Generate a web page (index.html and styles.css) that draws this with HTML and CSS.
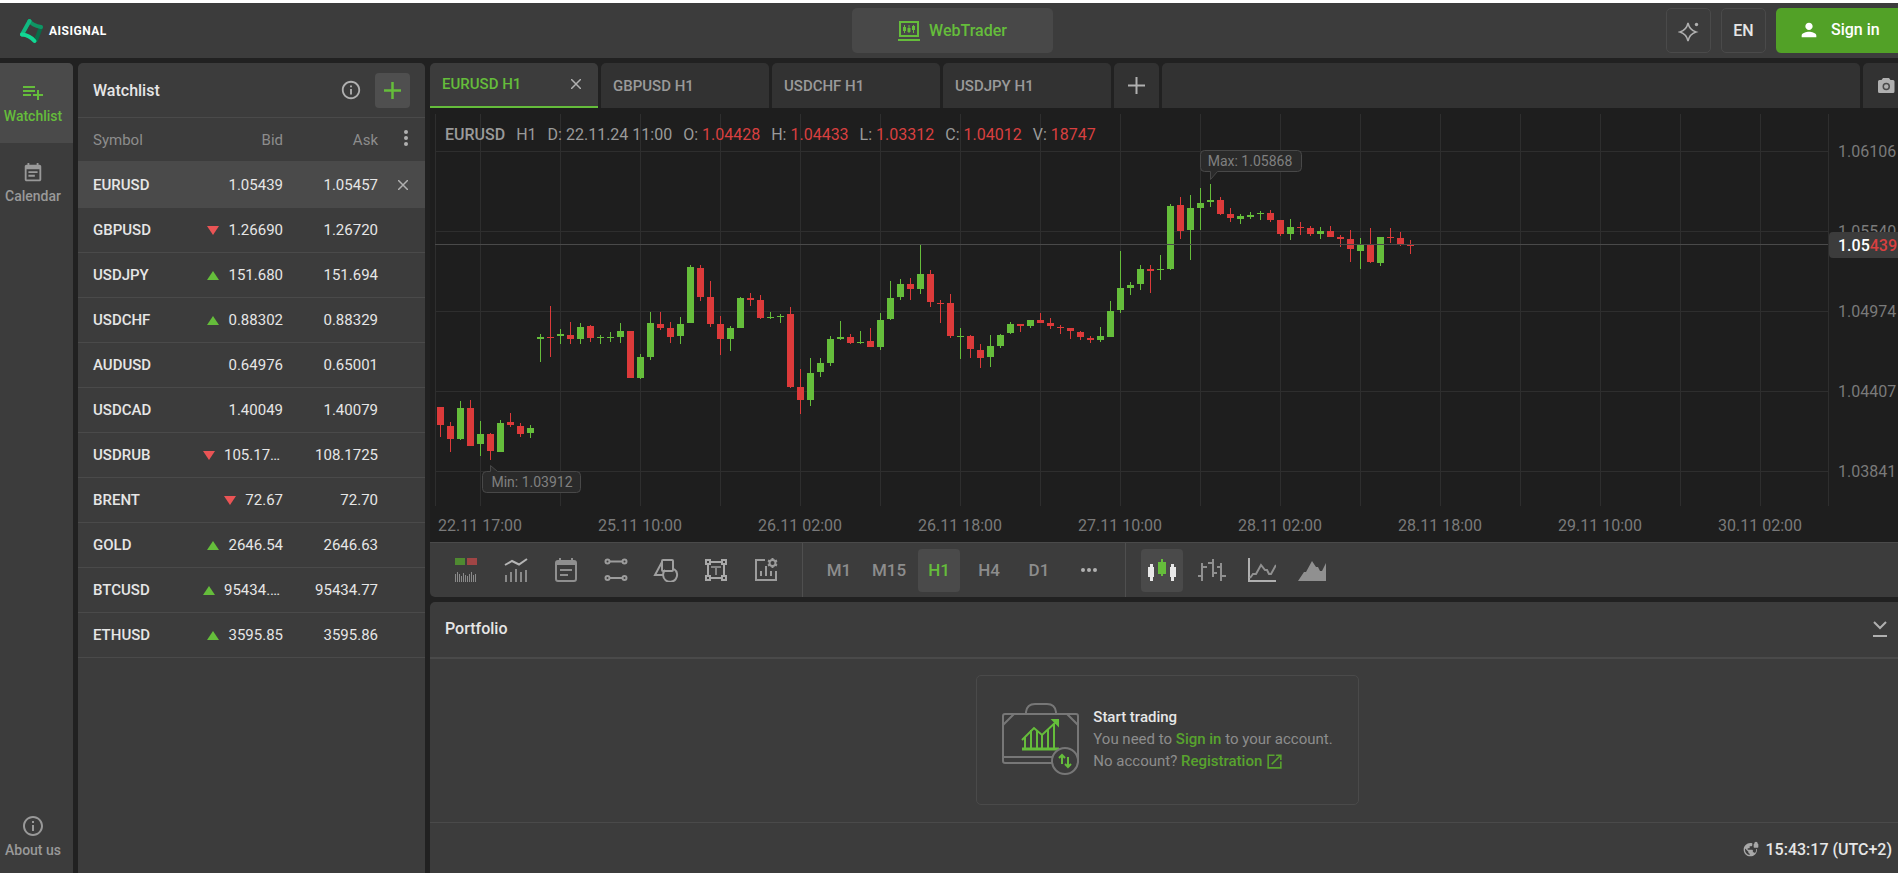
FILE: index.html
```html
<!DOCTYPE html>
<html lang="en">
<head>
<meta charset="utf-8">
<title>AISIGNAL WebTrader</title>
<link rel="stylesheet" href="styles.css">
</head>
<body>
<div class="app">
  <header class="topbar">
    <a class="brand" href="#">
      <svg width="26" height="26" viewBox="0 0 26 26" fill="none" stroke-linecap="round" stroke-linejoin="round" stroke-width="4">
        <path d="M23 9 L18 22" stroke="#0a6b48"/>
        <path d="M11.500 3 C14 7 18 8 23 9" stroke="#0f9564"/>
        <path d="M4 16.500 L11.500 3" stroke="#10b981"/>
        <path d="M4 16.500 C9 17 13 19 16.500 23" stroke="#12d894"/>
      </svg>
      <span>AISIGNAL</span>
    </a>
    <button class="mode" type="button">
      <svg width="22" height="22" viewBox="0 0 22 22" fill="none" stroke="currentColor" stroke-width="2">
        <path d="M2 2h18v14H2zM0 20h22"/><path stroke-width="1" d="M6.500 5v8M11 5v8M15.500 5v8"/><path stroke-width="3" d="M6.500 7v4M11 8v4M15.500 6v4"/>
      </svg>
      WebTrader
    </button>
    <div class="actions">
      <button class="square" type="button" aria-label="Assistant">
        <svg width="22" height="22" viewBox="0 0 22 22"><path d="M10 3 Q11.500 10 18 12 Q11.500 14 10 21 Q8.500 14 2 12 Q8.500 10 10 3z" fill="none" stroke="#b0b0b0" stroke-width="1.500"/><circle cx="18.500" cy="4.500" r="1.700" fill="#b0b0b0"/></svg>
      </button>
      <button class="square" type="button">EN</button>
      <button class="signin" type="button">
        <svg width="22" height="22" viewBox="0 0 24 24" fill="currentColor"><path d="M12 12c2.210 0 4-1.790 4-4s-1.790-4-4-4-4 1.790-4 4 1.790 4 4 4zm0 2c-2.670 0-8 1.340-8 4v2h16v-2c0-2.660-5.330-4-8-4z"/></svg>
        Sign in
      </button>
    </div>
  </header>

  <div class="body">
    <nav class="rail">
      <a class="rail-item active" href="#">
        <svg width="24" height="24" viewBox="0 0 24 24" fill="currentColor"><path d="M14 10H2v2h12v-2zm0-4H2v2h12V6zm4 8v-4h-2v4h-4v2h4v4h2v-4h4v-2h-4zM2 16h8v-2H2v2z"/></svg>
        Watchlist
      </a>
      <a class="rail-item" href="#">
        <svg width="22" height="22" viewBox="0 0 24 24" fill="currentColor"><path d="M19 3h-1V1h-2v2H8V1H6v2H5c-1.110 0-2 .9-2 2v14c0 1.100.89 2 2 2h14c1.100 0 2-.9 2-2V5c0-1.100-.9-2-2-2zm0 16H5V8h14v11z"/><path d="M7 10h10v2H7zM7 14h7v2H7z"/></svg>
        Calendar
      </a>
      <a class="rail-item last" href="#">
        <svg width="24" height="24" viewBox="0 0 24 24" fill="currentColor"><path d="M11 7h2v2h-2zm0 4h2v6h-2zm1-9C6.480 2 2 6.480 2 12s4.480 10 10 10 10-4.480 10-10S17.520 2 12 2zm0 18c-4.410 0-8-3.590-8-8s3.590-8 8-8 8 3.590 8 8-3.590 8-8 8z"/></svg>
        About us
      </a>
    </nav>

    <section class="watchlist">
      <div class="watch-head">
        <h2>Watchlist</h2>
        <button class="icon-btn" type="button" aria-label="Info"><svg width="22" height="22" viewBox="0 0 24 24" fill="currentColor"><path d="M11 7h2v2h-2zm0 4h2v6h-2zm1-9C6.480 2 2 6.480 2 12s4.480 10 10 10 10-4.480 10-10S17.520 2 12 2zm0 18c-4.410 0-8-3.590-8-8s3.590-8 8-8 8 3.590 8 8-3.590 8-8 8z"/></svg></button>
        <button class="add" type="button" aria-label="Add symbol"><svg width="17" height="17" viewBox="0 0 17 17" stroke="currentColor" stroke-width="2.500"><path d="M8.500 0v17M0 8.500h17"/></svg></button>
      </div>
      <table class="quotes">
        <thead>
          <tr><th class="sym">Symbol</th><th>Bid</th><th>Ask</th><th class="act"><button class="icon-btn" type="button" aria-label="Columns"><svg width="4" height="16" viewBox="0 0 4 16" fill="currentColor"><circle cx="2" cy="2" r="2"/><circle cx="2" cy="8" r="2"/><circle cx="2" cy="14" r="2"/></svg></button></th></tr>
        </thead>
        <tbody>
          <tr class="selected"><td class="sym">EURUSD</td><td>1.05439</td><td>1.05457</td><td class="act"><button class="icon-btn" type="button" aria-label="Remove"><svg width="10" height="10" viewBox="0 0 10 10" stroke="currentColor" stroke-width="1.500"><path d="M0 0l10 10M10 0L0 10"/></svg></button></td></tr>
          <tr><td class="sym">GBPUSD</td><td><i class="down"></i>1.26690</td><td>1.26720</td><td></td></tr>
          <tr><td class="sym">USDJPY</td><td><i class="up"></i>151.680</td><td>151.694</td><td></td></tr>
          <tr><td class="sym">USDCHF</td><td><i class="up"></i>0.88302</td><td>0.88329</td><td></td></tr>
          <tr><td class="sym">AUDUSD</td><td>0.64976</td><td>0.65001</td><td></td></tr>
          <tr><td class="sym">USDCAD</td><td>1.40049</td><td>1.40079</td><td></td></tr>
          <tr><td class="sym">USDRUB</td><td><i class="down"></i><span class="clipped">105.17…</span></td><td>108.1725</td><td></td></tr>
          <tr><td class="sym">BRENT</td><td><i class="down"></i>72.67</td><td>72.70</td><td></td></tr>
          <tr><td class="sym">GOLD</td><td><i class="up"></i>2646.54</td><td>2646.63</td><td></td></tr>
          <tr><td class="sym">BTCUSD</td><td><i class="up"></i><span class="clipped">95434.…</span></td><td>95434.77</td><td></td></tr>
          <tr><td class="sym">ETHUSD</td><td><i class="up"></i>3595.85</td><td>3595.86</td><td></td></tr>
        </tbody>
      </table>
    </section>

    <main class="main">
      <div class="tabs">
        <div class="tab current"><a href="#">EURUSD H1</a><button class="icon-btn" type="button" aria-label="Close tab"><svg width="10" height="10" viewBox="0 0 10 10" stroke="currentColor" stroke-width="1.500"><path d="M0 0l10 10M10 0L0 10"/></svg></button></div>
        <div class="tab"><a href="#">GBPUSD H1</a></div>
        <div class="tab"><a href="#">USDCHF H1</a></div>
        <div class="tab"><a href="#">USDJPY H1</a></div>
        <button class="tab-add" type="button" aria-label="New tab"><svg width="17" height="17" viewBox="0 0 17 17" stroke="currentColor" stroke-width="2"><path d="M8.500 0v17M0 8.500h17"/></svg></button>
        <div class="tab-fill"></div>
        <button class="camera" type="button" aria-label="Screenshot"><svg width="17" height="15" viewBox="0 0 17 15"><path d="M5 0h6l1.500 2H15a1.500 1.500 0 0 1 1.500 1.500v10A1.500 1.500 0 0 1 15 15H1.500A1.500 1.500 0 0 1 0 13.500v-10A1.500 1.500 0 0 1 1.500 2h2z" fill="#b0b0b0"/><circle cx="8.250" cy="8.500" r="3" fill="none" stroke="#4a4a4a" stroke-width="1.500"/></svg></button>
      </div>

      <div class="chart">
        <svg class="plot" id="plot"></svg>
        <div class="legend">
          <b>EURUSD</b><span>H1</span><span>D: 22.11.24 11:00</span><span>O: <em>1.04428</em></span><span>H: <em>1.04433</em></span><span>L: <em>1.03312</em></span><span>C: <em>1.04012</em></span><span>V: <em>18747</em></span>
        </div>
        <div class="price-tag">1.05<em>439</em></div>
      </div>

      <div class="toolbar">
        <div class="tool-group">
          <button type="button" aria-label="One-click trading"><svg width="24" height="24" viewBox="0 0 24 24"><path fill="#4f8a31" d="M1 0h10v7H1z"/><path fill="#a04545" d="M13 0h10v7H13z"/><path stroke="#8a8a8a" stroke-width="1" d="M1.500 16v8M3.500 14v10M5.500 16v8M7.500 18v6M9.500 15v9M11.500 17v7M13.500 18v6M15.500 16v8M17.500 14v10M19.500 17v7M21.500 16v8"/></svg></button>
          <button type="button" aria-label="Indicators"><svg width="24" height="24" viewBox="0 0 24 24" fill="none" stroke="currentColor" stroke-width="2"><path d="M1 7l7-4 7 3.500 8-5.500"/><path stroke="#8a8a8a" d="M2 17v7M7 14v10M12 11v13M17 14v10M22 12v12"/></svg></button>
          <button type="button" aria-label="Calendar"><svg width="24" height="25" viewBox="0 0 24 25" fill="none" stroke="#8f8f8f" stroke-width="2"><rect x="2" y="3" width="20" height="20" rx="2"/><path stroke-width="4" d="M2 5h20"/><path d="M6 0v3M18 0v3M6 12h12M6 17h8"/></svg></button>
          <button type="button" aria-label="Lines"><svg width="24" height="24" viewBox="0 0 24 24" fill="none" stroke="#9c9c9c" stroke-width="2"><circle cx="3.500" cy="3.500" r="2"/><circle cx="20.500" cy="3.500" r="2"/><circle cx="3.500" cy="20" r="2"/><circle cx="20.500" cy="20" r="2"/><path d="M5.500 3.500h13M5.500 20h13"/></svg></button>
          <button type="button" aria-label="Shapes"><svg width="26" height="24" viewBox="0 0 26 24" fill="none" stroke="#a0a0a0" stroke-width="2"><path d="M9 4L2 17h8"/><path d="M12 12a7 7 0 1 0 9-1"/><rect x="9" y="2" width="11" height="11" rx="1"/></svg></button>
          <button type="button" aria-label="Text"><svg width="24" height="24" viewBox="0 0 24 24" fill="none" stroke="#a8a8a8" stroke-width="2"><path d="M2 2h4v4H2zM18 2h4v4h-4zM2 18h4v4H2zM18 18h4v4h-4zM6 4h12M6 20h12M4 6v12M20 6v12"/><path stroke="#858585" d="M7 9h10M12 9v8"/></svg></button>
          <button type="button" aria-label="Chart settings"><svg width="24" height="24" viewBox="0 0 24 24" fill="none" stroke="#9c9c9c" stroke-width="2"><path d="M11 2H2v20h20v-9M7 13v5M12 8v10M17 13v5"/><circle cx="18.500" cy="5" r="3"/><path d="M18.500 0v2M18.500 8v2M14 2.500l2 1M21 6.500l2 1M14 7.500l2-1M21 3.500l2-1"/></svg></button>
        </div>
        <div class="tool-group frames">
          <button type="button">M1</button><button type="button">M15</button><button class="on" type="button">H1</button><button type="button">H4</button><button type="button">D1</button>
          <button type="button" aria-label="More"><svg width="16" height="4" viewBox="0 0 16 4" fill="#b0b0b0"><circle cx="2" cy="2" r="2"/><circle cx="8" cy="2" r="2"/><circle cx="14" cy="2" r="2"/></svg></button>
        </div>
        <div class="tool-group">
          <button class="on" type="button" aria-label="Candles"><svg width="28" height="24" viewBox="0 0 28 24"><path fill="#e8e8e8" d="M0 9h2V6h3v3h1v10H5v4H2v-4H0zM22 9h1V6h3v3h2v10h-2v4h-3v-4h-1z"/><path fill="#65bd3b" d="M10 4h3V1h2v3h3v12h-3v2h-2v-2h-3z"/></svg></button>
          <button type="button" aria-label="Bars"><svg width="28" height="24" viewBox="0 0 28 24" fill="none" stroke="#909090" stroke-width="2"><path d="M4 5v18M0 18h4M4 9h5M15 1v18M10 5h5M15 15h4M23 5v18M19 9h4M23 18h5"/></svg></button>
          <button type="button" aria-label="Line"><svg width="28" height="24" viewBox="0 0 28 24" fill="none" stroke="#909090" stroke-width="2"><path stroke="#b0b0b0" d="M1 0v23h27"/><path d="M2 20l3-4 3 0 5-9 4 5h2l2 4h2l5-9"/></svg></button>
          <button type="button" aria-label="Area"><svg width="28" height="24" viewBox="0 0 28 24" fill="#909090"><path d="M0 23l6-9h2l6-11 4 6h2l2 4h2l4-8v18z"/></svg></button>
        </div>
      </div>

      <section class="portfolio">
        <div class="port-head">
          <h2>Portfolio</h2>
          <button class="icon-btn" type="button" aria-label="Collapse"><svg width="16" height="16" viewBox="0 0 16 16" fill="none" stroke="currentColor" stroke-width="2"><path d="M2 1l6 6 6-6M1 15h14"/></svg></button>
        </div>
        <div class="port-body">
          <div class="card">
            <svg width="78" height="74" viewBox="0 0 78 74" fill="none" stroke="#777" stroke-width="2">
              <path d="M24 11V9q1-8 9-8h12q8 0 9 8v2"/>
              <rect x="1" y="11" width="75" height="49" rx="2"/>
              <path d="M1 22l11-11M76 22L65 11M1 54h50"/>
              <g stroke="#65bd3b"><path stroke-width="3" d="M20 46h37"/><path stroke-width="2" d="M23 46V34M29 46V27M35 46V27M40 46V32M46 46V27M52 46V21"/><path stroke-width="2" d="M20 37l12-12 8 7 15-14"/><path fill="#65bd3b" d="M51 17h5v5z"/></g>
              <circle cx="63" cy="58" r="13" fill="#3c3c3c"/>
              <path stroke="#65bd3b" d="M60 61v-9M57 55l3-3 3 3M66 54v10M63 61l3 3 3-3"/>
            </svg>
            <div class="card-text">
              <b>Start trading</b>
              <p>You need to <a href="#">Sign in</a> to your account.</p>
              <p>No account? <a href="#">Registration<svg width="19" height="19" viewBox="0 0 24 24" fill="currentColor"><path d="M19 19H5V5h7V3H3v18h18v-9h-2v7zM14 3v2h3.590l-9.830 9.830 1.410 1.410L19 6.410V10h2V3h-7z"/></svg></a></p>
            </div>
          </div>
        </div>
        <footer class="status">
          <svg width="16" height="16" viewBox="0 0 24 24" fill="#a8a8a8"><path d="M22 4v-.5C22 2.120 20.880 1 19.500 1S17 2.120 17 3.500V4c-.55 0-1 .45-1 1v4c0 .55.45 1 1 1h5c.55 0 1-.45 1-1V5c0-.55-.45-1-1-1zm-2.280 8c.04.33.08.66.08 1 0 2.080-.8 3.970-2.100 5.390-.26-.81-1-1.390-1.900-1.390h-1v-3c0-.55-.45-1-1-1H7v-2h2c.55 0 1-.45 1-1V8h2c1.100 0 2-.9 2-2V3.460c-.95-.3-1.950-.46-3-.46C5.480 3 1 7.480 1 13s4.480 10 10 10 10-4.480 10-10c0-.34-.02-.67-.05-1h-2.030zM10 20.930c-3.950-.49-7-3.850-7-7.930 0-.62.08-1.210.21-1.790L8 16v1c0 1.100.9 2 2 2v1.930z"/></svg>
          <time>15:43:17 (UTC+2)</time>
        </footer>
      </section>
    </main>
  </div>
</div>
<script src="chart.js"></script>
</body>
</html>
```
FILE: styles.css
```css
* { box-sizing: border-box; }
html, body { height: 100%; }
body {
  margin: 0;
  overflow: hidden;
  background: #212121;
  color: #e6e6e6;
  font-family: Roboto, "Liberation Sans", sans-serif;
  font-size: 15px;
}
a { color: inherit; text-decoration: none; }
button { padding: 0; border: 0; background: none; color: inherit; font: inherit; }
svg { display: block; flex: none; }
h2 { margin: 0; font-size: 16px; font-weight: 500; }
em { font-style: normal; }

.app {
  display: flex;
  flex-direction: column;
  width: calc(100% + 7px);
  height: 100%;
  border-top: 3px solid #fff;
}
.topbar {
  display: grid;
  grid-template-columns: 1fr 201px 1fr;
  align-items: center;
  height: 55px;
  background: #3c3c3c;
}
.brand { display: flex; align-items: center; gap: 5px; padding-left: 18px; color: #fff; font-size: 12px; font-weight: 700; letter-spacing: 0.5px; }
.mode {
  display: flex;
  align-items: center;
  justify-content: center;
  gap: 9px;
  height: 45px;
  border-radius: 5px;
  background: #484848;
  color: #65bd3b;
  font-size: 16px;
  font-weight: 500;
}
.actions { display: flex; justify-content: flex-end; gap: 10px; }
.square {
  display: grid;
  place-items: center;
  width: 45px;
  height: 45px;
  border: 1px solid #4a4a4a;
  border-radius: 5px;
  font-size: 16px;
  font-weight: 500;
}
.signin {
  display: flex;
  align-items: center;
  gap: 11px;
  width: 129px;
  height: 45px;
  padding: 0 0 2px 22px;
  border-radius: 5px;
  background: #52a127;
  color: #fff;
  font-size: 16px;
  font-weight: 500;
}

.body { display: flex; gap: 5px; flex: 1; min-height: 0; padding-top: 5px; }
.rail { display: flex; flex-direction: column; width: 73px; border-radius: 0 5px 0 0; background: #3c3c3c; }
.rail-item {
  display: flex;
  flex-direction: column;
  align-items: center;
  justify-content: center;
  gap: 4px;
  height: 80px;
  padding-right: 7px;
  color: #999;
  font-size: 14px;
  font-weight: 500;
}
.rail-item.active { padding-bottom: 2px; border-radius: 0 5px 0 0; background: #4a4a4a; color: #65bd3b; }
.rail-item.last { height: 74px; margin-top: auto; }

.watchlist { width: 347px; border-radius: 5px 5px 0 0; background: #3c3c3c; }
.watch-head {
  display: flex;
  align-items: center;
  height: 55px;
  padding: 0 15px;
  border-bottom: 1px solid #4a4a4a;
}
.watch-head h2 { flex: 1; }
.icon-btn { display: inline-grid; place-items: center; color: #b0b0b0; }
.add {
  display: grid;
  place-items: center;
  width: 35px;
  height: 35px;
  margin-left: 13px;
  border-radius: 4px;
  background: #4f4f4f;
  color: #65bd3b;
}
.quotes { width: 100%; border-collapse: collapse; table-layout: fixed; }
.quotes th, .quotes td { height: 45px; padding: 0; border-bottom: 1px solid #4a4a4a; text-align: right; vertical-align: middle; font-weight: 400; }
.quotes th { height: 44px; border-bottom-width: 2px; color: #8d8d8d; }
.quotes .sym { width: 110px; padding-left: 15px; text-align: left; }
.quotes td.sym { font-weight: 500; }
.quotes th:nth-child(2), .quotes th:nth-child(3) { width: 95px; }
.quotes .act { padding-right: 17px; }
.selected { background: #4a4a4a; }
.clipped { display: inline-block; width: 59px; text-align: left; }
.up, .down { display: inline-block; margin-right: 9px; border: solid transparent; border-width: 0 6px; }
.up { border-bottom: 9px solid #65bd3b; }
.down { border-top: 9px solid #ea5455; }

.main { display: flex; flex-direction: column; flex: 1; min-width: 0; }
.tabs { display: flex; gap: 3px; height: 45px; }
.tab {
  display: flex;
  align-items: center;
  justify-content: space-between;
  width: 168px;
  padding: 0 17px 0 12px;
  border-radius: 5px 5px 0 0;
  background: #323232;
  color: #9a9a9a;
  font-size: 15px;
  font-weight: 500;
}
.tab.current { padding-bottom: 2px; border-bottom: 2px solid #65bd3b; background: #3c3c3c; color: #65bd3b; }
.tab-add, .camera { display: grid; place-items: center; width: 45px; border-radius: 5px 5px 0 0; background: #323232; color: #b0b0b0; }
.camera { width: 42px; padding-left: 4px; }
.tab-fill { flex: 1; border-radius: 5px 5px 0 0; background: #323232; }

.chart { position: relative; height: 434px; background: #1e1e1e; }
.plot { width: 100%; height: 100%; font-size: 16px; }
.plot .grid { stroke: #2e2e2e; }
.plot .now { stroke: #4a4a4a; }
.plot .axis-text { fill: #7a7a7a; }
.plot .tip { fill: #2a2a2a; stroke: #484848; }
.plot .tip-text { fill: #808080; font-size: 14px; }
.legend { position: absolute; top: 17px; left: 15px; display: flex; gap: 11px; color: #9a9a9a; font-size: 16px; line-height: 19px; }
.legend b { font-weight: 500; }
.legend em, .price-tag em { color: #d94040; }
.price-tag {
  position: absolute;
  top: 124px;
  right: 0;
  width: 76px;
  padding: 1px 0 0 9px;
  border-radius: 4px 0 0 4px;
  background: #3c3c3c;
  color: #fff;
  font-size: 16px;
  font-weight: 500;
  line-height: 25px;
}

.toolbar { display: flex; height: 55px; border-top: 1px solid #4a4a4a; border-radius: 0 0 5px 5px; background: #3c3c3c; }
.tool-group { display: flex; align-items: center; gap: 8px; padding: 0 15px; border-right: 1px solid #4f4f4f; }
.tool-group:last-child { border-right: 0; }
.tool-group button { display: grid; place-items: center; width: 42px; height: 43px; border-radius: 4px; color: #b5b5b5; }
.tool-group .on { background: #4a4a4a; }
.tool-group.frames button { color: #8d8d8d; font-size: 17px; font-weight: 500; }
.tool-group.frames .on { color: #65bd3b; }

.portfolio { display: flex; flex-direction: column; flex: 1; margin-top: 5px; border-radius: 5px 5px 0 0; background: #3c3c3c; }
.port-head { display: flex; align-items: center; justify-content: space-between; height: 57px; padding: 0 17px 2px 15px; border-bottom: 2px solid #4a4a4a; }
.port-body { display: grid; place-items: center; flex: 1; padding-bottom: 2px; }
.card {
  display: flex;
  gap: 13px;
  padding: 27px 25px;
  border: 1px solid #4a4a4a;
  border-radius: 5px;
  color: #8d8d8d;
  line-height: 22px;
}
.card-text { padding-top: 3px; }
.card p { margin: 0; }
.card b { color: #e6e6e6; font-weight: 500; }
.card a { color: #58a32e; font-weight: 500; }
.card a svg { display: inline-block; margin-left: 3px; vertical-align: -5px; }
.status { display: flex; align-items: center; justify-content: flex-end; gap: 6px; height: 51px; padding: 2px 13px 0 0; border-top: 1px solid #4a4a4a; font-size: 16px; font-weight: 500; }
```
FILE: chart.js
```js
// Candles: direction, high, top of body, bottom of body, low (three steps to a pixel, down from the base).
const series = [
  { base: 122, rows: `r 531 531 585 621|r 576 588 627 666|g 513 534 627 630|r 510 534 648 648|g 573 612 642 678|r 609 612 663 690|g 570 579 666 666|r 549 576 585 591|r 579 588 612 621|g 585 594 609 624|g 312 321 327 396|r 228 321 324 381|g 297 312 318 342|r 276 315 327 342|g 279 291 327 342|r 285 288 324 336|g 315 321 324 342|g 306 321 324 336|g 279 303 321 339|r 303 303 444 444|g 372 381 444 447|g 246 279 381 390|r 246 282 294 300|r 276 294 321 339|g 261 282 318 342|g 105 111 279 279|r 105 114 201 213|r 153 201 282 291|r 258 282 327 375|g 288 294 327 363|g 201 204 294 294|r 189 204 210 228|r 195 210 264 267|g 246 261 264 267|g 252 258 261 279|r 231 252 471 474|r 417 471 510 552|g 384 429 510 528|g 384 399 426 441|g 318 327 399 408|g 273 321 327 330|r 312 321 339 342|g 303 336 339 342|r 294 333 351 351|g 249 270 351 360|g 153 204 267 270|g 147 162 201 210` },
  { base: 32, rows: `r 414 432 447 480|g 315 402 447 462|r 390 402 486 501|r 480 489 492 549|r 462 489 588 594|g 564 588 591 657|r 585 588 627 654|r 612 630 654 684|g 585 618 651 681|g 582 585 618 624|g 546 552 579 582|r 552 552 558 576|g 540 540 558 564|r 519 540 549 549|r 534 549 558 567|r 555 561 564 582|r 564 564 573 597|r 573 576 591 600|r 588 594 600 609|g 561 588 600 606|g 483 513 591 591|g 333 444 510 519|g 426 435 444 465|g 375 387 432 450|r 375 387 393 459|g 345 387 390 420|g 192 198 387 390|r 171 195 273 297|g 165 204 270 360|g 144 189 204 270|g 132 180 186 201|r 171 180 222 225|r 204 222 234 246|g 222 228 237 252|g 216 225 231 237|g 213 219 222 240|r 210 219 240 246|r 240 240 282 288|g 237 261 282 300|r 246 261 264 285|r 258 264 282 288|g 261 273 282 297|r 258 273 291 291|r 285 291 297 321|r 270 297 327 366|g 294 315 333 387|r 264 315 366 369|g 291 291 369 378|r 264 291 294 309|r 276 294 312 318|r 300 315 318 342` }
];
const colors = { r: '#dc3a3a', g: '#65bd3b' };
const plot = document.getElementById('plot');

function draw() {
  const right = plot.clientWidth - 77;
  let out = '';
  const line = (x1, y1, x2, y2, c) => { out += `<line class="${c}" x1="${x1}" y1="${y1}" x2="${x2}" y2="${y2}"/>`; };
  const text = (x, y, s, c, anchor) => { out += `<text class="${c}" x="${x}" y="${y}" text-anchor="${anchor}">${s}</text>`; };

  line(5.5, 6, 5.5, 398, 'grid');
  line(right + 0.5, 6, right + 0.5, 398, 'grid');
  for (let x = 50; x < right; x += 80) line(x + 0.5, 6, x + 0.5, 398, 'grid');
  ['1.06106', '1.05540', '1.04974', '1.04407', '1.03841'].forEach((p, i) => {
    const y = 43 + 80 * i;
    line(5, y + 0.5, right, y + 0.5, 'grid');
    text(right + 10, y + 6, p, 'axis-text', 'start');
  });
  ['22.11 17:00', '25.11 10:00', '26.11 02:00', '26.11 18:00', '27.11 10:00', '28.11 02:00', '28.11 18:00', '29.11 10:00', '30.11 02:00'].forEach((d, i) => {
    text(50 + 160 * i, 423, d, 'axis-text', 'middle');
  });

  let x = 10;
  series.forEach(({ base, rows }) => rows.split('|').forEach(row => {
    const [dir, ...v] = row.split(' ');
    const [hi, top, bottom, lo] = v.map(n => base + Math.round(n / 3));
    out += `<path fill="${colors[dir]}" d="M${x} ${hi}h1V${lo}h-1zM${x - 3} ${top}h7V${bottom}h-7z"/>`;
    x += 10;
  }));
  line(5, 136.5, right, 136.5, 'now');

  out += '<path class="tip" d="M56.500 363.500h4v-6l7 6h79a4 4 0 0 1 4 4v13a4 4 0 0 1-4 4h-90a4 4 0 0 1-4-4v-13a4 4 0 0 1 4-4z"/>';
  text(102, 379, 'Min: 1.03912', 'tip-text', 'middle');
  out += '<path class="tip" d="M774.500 42.500h93a4 4 0 0 1 4 4v13a4 4 0 0 1-4 4h-80l-7 8v-8h-6a4 4 0 0 1-4-4v-13a4 4 0 0 1 4-4z"/>';
  text(820, 58, 'Max: 1.05868', 'tip-text', 'middle');
  plot.innerHTML = out;
}
draw();
window.addEventListener('resize', draw);
```
